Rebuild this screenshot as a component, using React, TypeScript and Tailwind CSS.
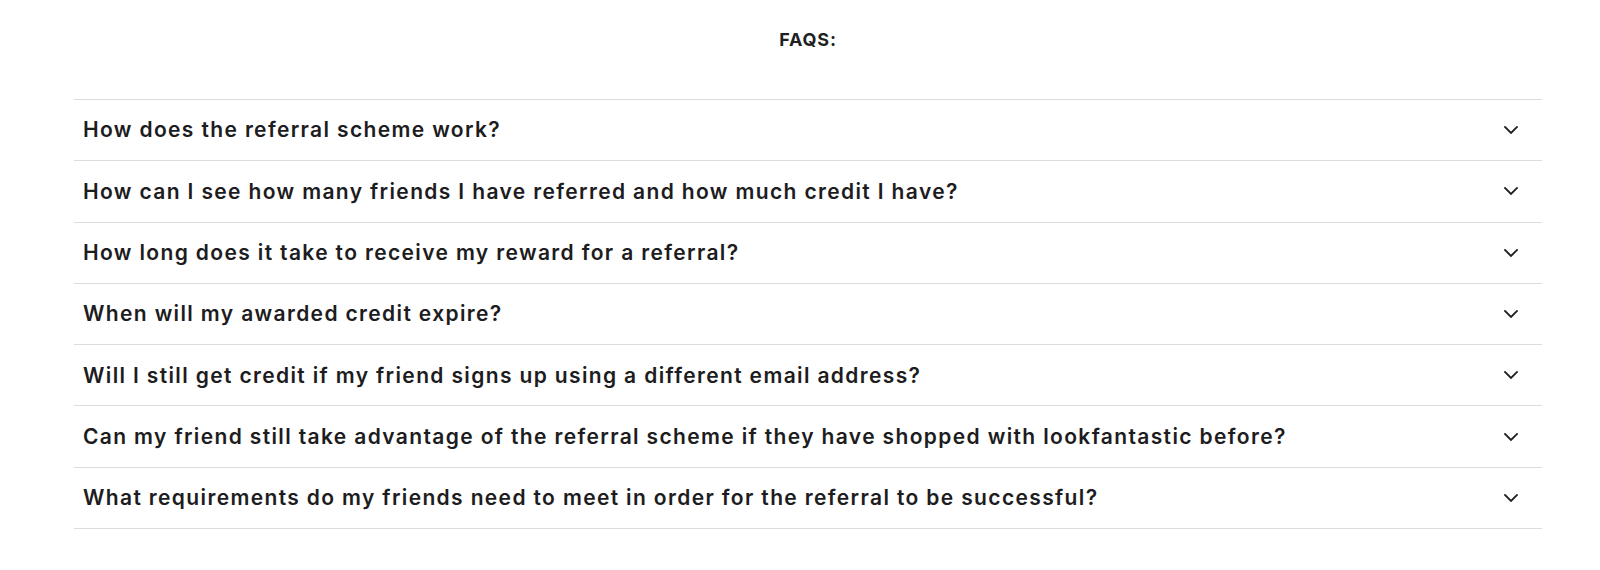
import React from "react";

const questions = [
  "How does the referral scheme work?",
  "How can I see how many friends I have referred and how much credit I have?",
  "How long does it take to receive my reward for a referral?",
  "When will my awarded credit expire?",
  "Will I still get credit if my friend signs up using a different email address?",
  "Can my friend still take advantage of the referral scheme if they have shopped with lookfantastic before?",
  "What requirements do my friends need to meet in order for the referral to be successful?",
];

function Chevron() {
  return (
    <svg width="14" height="8" viewBox="0 0 14 8" fill="none" className="block">
      <path d="M1 1L7 7L13 1" stroke="#1f1f24" strokeWidth="1.8" strokeLinecap="square" />
    </svg>
  );
}

export default function App() {
  return (
    <div className="min-h-[570px] bg-white" style={{ fontFamily: "Inter, 'Noto Sans', sans-serif" }}>
      <div className="ml-[74px] w-[1468px] pt-[30px]">
        <h2 className="text-center text-[18px] leading-[20px] font-bold tracking-[0.8px] text-[#1f1f24]">
          FAQS:
        </h2>
        <div className="mt-[49px] border-t border-[#dcdcdc]">
          {questions.map((q) => (
            <div
              key={q}
              className="flex h-[61.3px] items-center justify-between border-b border-[#dcdcdc] pl-[9px] pr-[24px]"
            >
              <span className="text-[21px] font-semibold tracking-[1.36px] text-[#1c1c21]">{q}</span>
              <Chevron />
            </div>
          ))}
        </div>
      </div>
    </div>
  );
}
